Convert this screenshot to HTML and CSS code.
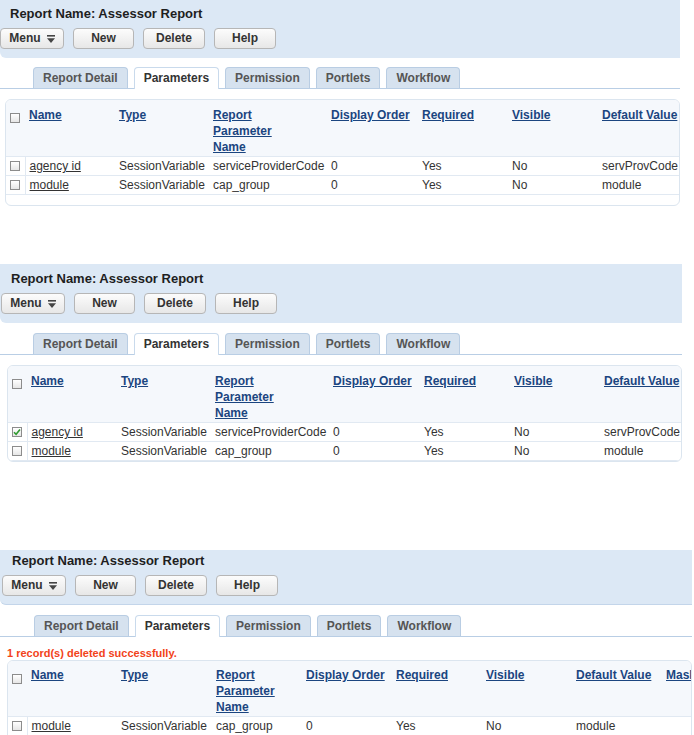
FILE: index.html
```html
<!DOCTYPE html>
<html lang="en">
<head>
    <meta charset="UTF-8">
    <title>Report Parameters</title>
    <link rel="stylesheet" href="styles.css">
</head>
<body>
    <!-- step 1: list of parameters -->
    <div class="shot shot-1">
        <div class="band">
            <h1>Report Name: Assessor Report</h1>
            <div class="btns">
                <button class="btn btn-menu">Menu <svg width="8" height="8" viewBox="0 0 8 8"><rect x="0" y="0" width="8" height="1.6" fill="#444"/><polygon points="0,3.2 8,3.2 4,8" fill="#444"/></svg></button>
                <button class="btn btn-new">New</button>
                <button class="btn btn-delete">Delete</button>
                <button class="btn btn-help">Help</button>
            </div>
        </div>
        <ul class="tabs">
            <li class="tab">Report Detail</li>
            <li class="tab active">Parameters</li>
            <li class="tab">Permission</li>
            <li class="tab">Portlets</li>
            <li class="tab">Workflow</li>
        </ul>
        <div class="grid-box">
            <table class="grid">
                <colgroup>
                    <col class="c-cb"><col class="c-name"><col class="c-type"><col class="c-report"><col class="c-order"><col class="c-std"><col class="c-std"><col class="c-std">
                </colgroup>
                <thead>
                    <tr>
                        <th class="cb"><span class="cbx"></span></th>
                        <th><a href="#">Name</a></th>
                        <th><a href="#">Type</a></th>
                        <th><a href="#">Report<br>Parameter<br>Name</a></th>
                        <th><a href="#">Display Order</a></th>
                        <th><a href="#">Required</a></th>
                        <th><a href="#">Visible</a></th>
                        <th><a href="#">Default Value</a></th>
                    </tr>
                </thead>
                <tbody>
                    <tr>
                        <td class="cb"><span class="cbx"></span></td>
                        <td><a href="#" class="row-link">agency id</a></td>
                        <td>SessionVariable</td>
                        <td>serviceProviderCode</td>
                        <td>0</td>
                        <td>Yes</td>
                        <td>No</td>
                        <td>servProvCode</td>
                    </tr>
                    <tr>
                        <td class="cb"><span class="cbx"></span></td>
                        <td><a href="#" class="row-link">module</a></td>
                        <td>SessionVariable</td>
                        <td>cap_group</td>
                        <td>0</td>
                        <td>Yes</td>
                        <td>No</td>
                        <td>module</td>
                    </tr>
                </tbody>
            </table>
        </div>
    </div>

    <!-- step 2: row selected -->
    <div class="shot shot-2">
        <div class="band">
            <h1>Report Name: Assessor Report</h1>
            <div class="btns">
                <button class="btn btn-menu">Menu <svg width="8" height="8" viewBox="0 0 8 8"><rect x="0" y="0" width="8" height="1.6" fill="#444"/><polygon points="0,3.2 8,3.2 4,8" fill="#444"/></svg></button>
                <button class="btn btn-new">New</button>
                <button class="btn btn-delete">Delete</button>
                <button class="btn btn-help">Help</button>
            </div>
        </div>
        <ul class="tabs">
            <li class="tab">Report Detail</li>
            <li class="tab active">Parameters</li>
            <li class="tab">Permission</li>
            <li class="tab">Portlets</li>
            <li class="tab">Workflow</li>
        </ul>
        <div class="grid-box">
            <table class="grid">
                <colgroup>
                    <col class="c-cb"><col class="c-name"><col class="c-type"><col class="c-report"><col class="c-order"><col class="c-std"><col class="c-std"><col class="c-std">
                </colgroup>
                <thead>
                    <tr>
                        <th class="cb"><span class="cbx"></span></th>
                        <th><a href="#">Name</a></th>
                        <th><a href="#">Type</a></th>
                        <th><a href="#">Report<br>Parameter<br>Name</a></th>
                        <th><a href="#">Display Order</a></th>
                        <th><a href="#">Required</a></th>
                        <th><a href="#">Visible</a></th>
                        <th><a href="#">Default Value</a></th>
                    </tr>
                </thead>
                <tbody>
                    <tr>
                        <td class="cb"><span class="cbx checked"><svg width="8" height="8" viewBox="0 0 8 8"><path d="M1 4.2 L3.1 6.3 L7 1.6" fill="none" stroke="#2f9a2f" stroke-width="1.6"/></svg></span></td>
                        <td><a href="#" class="row-link">agency id</a></td>
                        <td>SessionVariable</td>
                        <td>serviceProviderCode</td>
                        <td>0</td>
                        <td>Yes</td>
                        <td>No</td>
                        <td>servProvCode</td>
                    </tr>
                    <tr>
                        <td class="cb"><span class="cbx"></span></td>
                        <td><a href="#" class="row-link">module</a></td>
                        <td>SessionVariable</td>
                        <td>cap_group</td>
                        <td>0</td>
                        <td>Yes</td>
                        <td>No</td>
                        <td>module</td>
                    </tr>
                </tbody>
            </table>
        </div>
    </div>

    <!-- step 3: after delete -->
    <div class="shot shot-3">
        <div class="band">
            <h1>Report Name: Assessor Report</h1>
            <div class="btns">
                <button class="btn btn-menu">Menu <svg width="8" height="8" viewBox="0 0 8 8"><rect x="0" y="0" width="8" height="1.6" fill="#444"/><polygon points="0,3.2 8,3.2 4,8" fill="#444"/></svg></button>
                <button class="btn btn-new">New</button>
                <button class="btn btn-delete">Delete</button>
                <button class="btn btn-help">Help</button>
            </div>
        </div>
        <ul class="tabs">
            <li class="tab">Report Detail</li>
            <li class="tab active">Parameters</li>
            <li class="tab">Permission</li>
            <li class="tab">Portlets</li>
            <li class="tab">Workflow</li>
        </ul>
        <div class="msg">1 record(s) deleted successfully.</div>
        <div class="grid-box">
            <table class="grid grid-short">
                <colgroup>
                    <col class="c-cb"><col class="c-name"><col class="c-type"><col class="c-report"><col class="c-order"><col class="c-std"><col class="c-std"><col class="c-std"><col class="c-std">
                </colgroup>
                <thead>
                    <tr>
                        <th class="cb"><span class="cbx"></span></th>
                        <th><a href="#">Name</a></th>
                        <th><a href="#">Type</a></th>
                        <th><a href="#">Report<br>Parameter<br>Name</a></th>
                        <th><a href="#">Display Order</a></th>
                        <th><a href="#">Required</a></th>
                        <th><a href="#">Visible</a></th>
                        <th><a href="#">Default Value</a></th>
                        <th><a href="#">Mask</a></th>
                    </tr>
                </thead>
                <tbody>
                    <tr>
                        <td class="cb"><span class="cbx"></span></td>
                        <td><a href="#" class="row-link">module</a></td>
                        <td>SessionVariable</td>
                        <td>cap_group</td>
                        <td>0</td>
                        <td>Yes</td>
                        <td>No</td>
                        <td>module</td>
                        <td></td>
                    </tr>
                </tbody>
            </table>
        </div>
    </div>
</body>
</html>
```

FILE: styles.css
```css
* {
    margin: 0;
    padding: 0;
    box-sizing: border-box;
}

html, body {
    height: 735px;
    overflow: hidden;
}

body {
    font-family: 'Liberation Sans', Arial, sans-serif;
    font-size: 12px;
    color: #333;
    background: #fff;
}

.shot {
    width: 680px;
}

.shot-2 {
    width: 682px;
    margin-top: 58px;
}

.shot-3 {
    width: 692px;
    margin-top: 88px;
}

/* header band */
.band {
    background: #dce8f5;
    padding: 6px 0 9px 0;
    border-bottom-left-radius: 6px;
}

.shot-2 .band {
    padding: 7px 0 9px 1px;
}

.shot-3 .band {
    padding: 3px 0 8px 2px;
    border-bottom: 1px solid #c3d5ea;
}

.band h1 {
    font-size: 13px;
    line-height: 16px;
    color: #1e1e1e;
    padding-left: 10px;
}

.btns {
    display: flex;
    gap: 9px;
    margin-top: 6px;
}

.btn {
    height: 21px;
    border: 1px solid #b6b6b6;
    border-radius: 4px;
    background: linear-gradient(#fcfcfc, #e7e7e7);
    font: bold 12px/19px 'Liberation Sans', Arial, sans-serif;
    color: #333;
    text-align: center;
}

.btn-menu {
    width: 64px;
    display: flex;
    align-items: center;
    justify-content: center;
    gap: 6px;
}

.btn-new { width: 61px; }
.btn-delete { width: 62px; }
.btn-help { width: 62px; }

/* tabs */
.tabs {
    display: flex;
    align-items: flex-start;
    gap: 6px;
    list-style: none;
    height: 22px;
    margin-top: 9px;
    padding-left: 33px;
    border-bottom: 1px solid #b9cee5;
}

.shot-2 .tabs { margin-top: 10px; }
.shot-3 .tabs { margin-top: 10px; padding-left: 34px; }

.tab {
    height: 21px;
    padding: 0 9px;
    border: 1px solid #b9cde3;
    border-bottom: none;
    border-radius: 4px 4px 0 0;
    background: #d6e2ef;
    font-weight: bold;
    line-height: 20px;
    color: #555;
}

.tab.active {
    height: 22px;
    background: #fff;
    border-color: #c9daec;
    color: #333;
}

.msg {
    margin-top: 10px;
    padding-left: 7px;
    font-size: 11px;
    font-weight: bold;
    line-height: 13px;
    color: #f2431a;
}

/* parameter grid */
.grid-box {
    margin: 10px 0 0 5px;
    border: 1px solid #dbe5ef;
    border-radius: 6px;
    overflow: hidden;
    padding-bottom: 10px;
}

.shot-2 .grid-box {
    margin-top: 10px;
    margin-left: 7px;
    padding-bottom: 0;
}

.shot-3 .grid-box {
    margin: 0 0 0 7px;
}

.grid {
    border-collapse: collapse;
    table-layout: fixed;
    width: 682px;
}

.grid-short {
    width: 744px;
}

.c-cb { width: 19px; }
.c-name { width: 90px; }
.c-type { width: 94px; }
.c-report { width: 118px; }
.c-order { width: 91px; }
.c-std { width: 90px; }

.grid-short .c-type { width: 95px; }
.grid-short .c-report { width: 90px; }
.grid-short .c-order { width: 90px; }

.grid th {
    background: #f5f8fc;
    text-align: left;
    vertical-align: top;
    padding: 7px 4px 1px;
    line-height: 16px;
    border-bottom: 1px solid #e1e9f2;
    white-space: nowrap;
}

.grid-short th {
    padding-top: 6px;
}

.grid th a {
    color: #1b4580;
    font-weight: bold;
}

.grid td {
    height: 18px;
    padding: 0 4px;
    line-height: 18px;
    border-bottom: 1px solid #e1e9f2;
    white-space: nowrap;
    overflow: hidden;
}

.grid .cb {
    padding: 0 0 0 4px;
}

.grid th.cb {
    padding-top: 10px;
}

.grid td.cb {
    border-right: 1px solid #e1e9f2;
}

.row-link {
    color: #333;
}

.cbx {
    display: inline-block;
    width: 10px;
    height: 10px;
    border: 1px solid #8c8c8c;
    background: linear-gradient(#fff, #e6e6e6);
    vertical-align: middle;
    position: relative;
    top: -1px;
}

.cbx svg {
    display: block;
}
```
